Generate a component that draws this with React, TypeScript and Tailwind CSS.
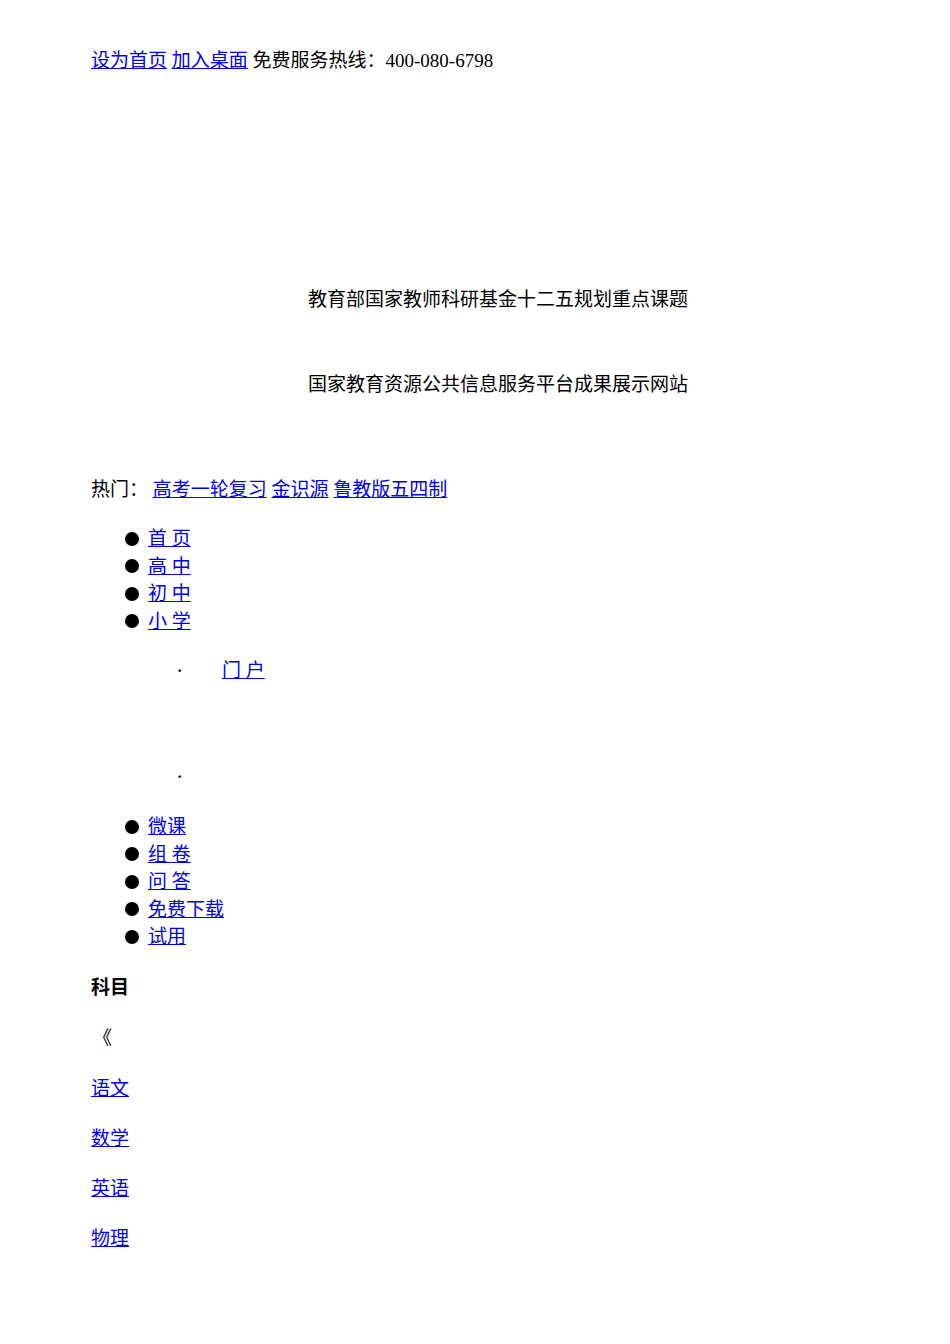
const link = 'text-[#0000ee] underline';
const row = 'h-[27.5px] leading-[27.5px] whitespace-pre';

function Bullet({ children }: { children: React.ReactNode }) {
  return (
    <div className={`${row} flex items-center`}>
      <span className="ml-[34px] mr-[9px] w-[14px] h-[14px] rounded-full bg-black shrink-0" />
      {children}
    </div>
  );
}

export default function App() {
  const topNav = ['首 页', '高 中', '初 中', '小 学'];
  const tools = ['微课', '组 卷', '问 答', '免费下载', '试用'];
  const subjects = ['语文', '数学', '英语', '物理'];

  return (
    <div
      className="bg-white text-black text-[19px] pl-[91px] pr-[45px] pt-[47px] min-h-[1344px]"
      style={{ fontFamily: '"Liberation Serif", "Noto Sans CJK SC", serif' }}
    >
      <div className={row}>
        <a className={link}>设为首页</a> <a className={link}>加入桌面</a> 免费服务热线：400-080-6798
      </div>

      <div className={`${row} mt-[211px] text-center`}>教育部国家教师科研基金十二五规划重点课题</div>
      <div className={`${row} mt-[58px] text-center`}>国家教育资源公共信息服务平台成果展示网站</div>

      <div className={`${row} mt-[77px]`}>
        热门： <a className={link}>高考一轮复习</a> <a className={link}>金识源</a> <a className={link}>鲁教版五四制</a>
      </div>

      <div className="mt-[22px]">
        {topNav.map((t) => (
          <Bullet key={t}>
            <a className={link}>{t}</a>
          </Bullet>
        ))}
      </div>

      <div className={`${row} mt-[22px] flex`}>
        <span className="w-[131px] pl-[86px] text-[16px] font-bold">·</span>
        <a className={link}>门 户</a>
      </div>
      <div className={`${row} mt-[78px] pl-[86px] text-[16px] font-bold`}>·</div>

      <div className="mt-[23px]">
        {tools.map((t) => (
          <Bullet key={t}>
            <a className={link}>{t}</a>
          </Bullet>
        ))}
      </div>

      <div className={`${row} mt-[23px] font-bold`}>科目</div>
      <div className={`${row} mt-[23.5px] pl-[2px]`}>《</div>
      {subjects.map((s) => (
        <div key={s} className={`${row} mt-[22.5px]`}>
          <a className={link}>{s}</a>
        </div>
      ))}
    </div>
  );
}
